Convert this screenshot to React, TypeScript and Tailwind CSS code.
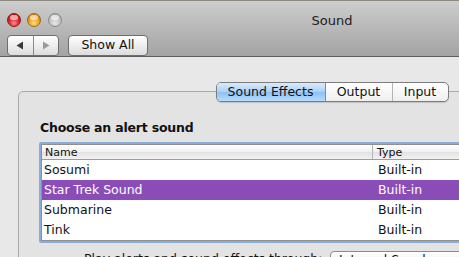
import React from "react";

const font = { fontFamily: '"DejaVu Sans", "Liberation Sans", sans-serif' };

function Light({ kind }: { kind: "red" | "yellow" | "gray" }) {
  const cls =
    kind === "red"
      ? "bg-[radial-gradient(circle_at_50%_75%,#ff8a8a_0%,#e0262b_45%,#a50d12_100%)] border-[#8a1a1a]"
      : kind === "yellow"
      ? "bg-[radial-gradient(circle_at_50%_75%,#ffe08a_0%,#f0a21f_45%,#b8650a_100%)] border-[#9a6a1a]"
      : "bg-[radial-gradient(circle_at_50%_75%,#e6e6e6_0%,#c4c4c4_50%,#9a9a9a_100%)] border-[#8a8a8a]";
  return (
    <div className={`relative w-[14px] h-[14px] rounded-full border ${cls}`}>
      <div className="mx-auto mt-[1px] w-[8px] h-[5px] rounded-full bg-white/60" />
    </div>
  );
}

const rows = [
  { name: "Sosumi", type: "Built-in" },
  { name: "Star Trek Sound", type: "Built-in", sel: true },
  { name: "Submarine", type: "Built-in" },
  { name: "Tink", type: "Built-in" },
];

export default function App() {
  return (
    <div className="w-[459px] h-[257px] overflow-hidden bg-[#e8e8e8]" style={font}>
      <div className="w-[664px]">
        {/* toolbar */}
        <div className="h-[57px] border-t border-[#8e8a82] border-b border-b-[#5c5c5c] bg-[linear-gradient(to_bottom,#cdcdcd,#a3a3a3)]">
          <div className="grid grid-cols-[1fr_auto_1fr] items-center pt-[8px] h-[22px] box-content">
            <div className="flex items-center pl-[7px] gap-[6px]">
              <Light kind="red" />
              <Light kind="yellow" />
              <div className="ml-[1px]">
                <Light kind="gray" />
              </div>
            </div>
            <div className="text-[13px] leading-none text-[#202020] pt-[1px]">Sound</div>
            <div />
          </div>
          <div className="flex items-center pl-[7px] pt-[4px] gap-[9px]">
            <div className="flex h-[21px] w-[52px] rounded-[4px] border border-[#6e6e6e] bg-[linear-gradient(to_bottom,#ffffff,#dcdcdc)] overflow-hidden">
              <div className="flex-1 flex items-center justify-center border-r border-[#8a8a8a]">
                <svg width="8" height="9" viewBox="0 0 8 9">
                  <path d="M7 0.5 L0.5 4.5 L7 8.5 Z" fill="#3a3a3a" />
                </svg>
              </div>
              <div className="flex-1 flex items-center justify-center">
                <svg width="8" height="9" viewBox="0 0 8 9">
                  <path d="M1 0.5 L7.5 4.5 L1 8.5 Z" fill="#9a9a9a" />
                </svg>
              </div>
            </div>
            <div className="h-[21px] w-[80px] rounded-[4px] border border-[#6e6e6e] bg-[linear-gradient(to_bottom,#ffffff,#dcdcdc)] flex items-center justify-center text-[12.5px] text-[#111]">
              Show All
            </div>
          </div>
        </div>

        {/* content */}
        <div className="px-[18px] pt-[25px]">
          <div className="relative z-10 flex justify-center">
            <div className="flex h-[20px] rounded-[5px] border border-[#7d7d7d] bg-[linear-gradient(to_bottom,#ffffff,#efefef)] shadow-[0_1px_1px_rgba(0,0,0,0.15)] overflow-hidden text-[12.5px] text-[#111]">
              <div className="w-[109px] flex items-center justify-center bg-[linear-gradient(to_bottom,#d9ebfd,#a9d0f6_50%,#8cc0f3_51%,#b6dcfb)] border-r border-[#6b8fb8]">
                Sound Effects
              </div>
              <div className="w-[67px] flex items-center justify-center border-r border-[#b4b4b4]">Output</div>
              <div className="w-[55px] flex items-center justify-center">Input</div>
            </div>
          </div>
          <div className="-mt-[11px] h-[300px] rounded-[5px] border border-[#a9a9a9] bg-[#e3e3e3] pt-[28px] pl-[20px] pr-[20px]">
            <div className="ml-[1px] text-[12.5px] leading-[15px] font-bold text-[#111] tracking-[-0.2px]">Choose an alert sound</div>
            <div className="mt-[7px] border-2 border-[#89acd9] rounded-[2px]">
              <div className="border border-[#8f8f8f] bg-white">
                <div className="flex h-[15px] border-b border-[#9c9c9c] bg-[linear-gradient(to_bottom,#ffffff,#f0f0f0_50%,#e2e2e2_51%,#f2f2f2)] text-[11px] leading-[13px] text-[#111]">
                  <div className="w-[331px] pl-[3px] flex items-center border-r border-[#b5b5b5]">Name</div>
                  <div className="pl-[4px] flex items-center">Type</div>
                </div>
                {rows.map((r) => (
                  <div
                    key={r.name}
                    className={`flex h-[20px] items-center text-[12.5px] ${
                      r.sel ? "bg-[#8a4db8] text-white" : "text-[#111]"
                    }`}
                  >
                    <div className="w-[331px] pl-[2px]">{r.name}</div>
                    <div className="pl-[5px]">{r.type}</div>
                  </div>
                ))}
              </div>
            </div>
            <div className="flex items-start mt-[8px] pl-[45px]">
              <div className="text-[12.5px] leading-[15px] text-[#111] w-[246px]">Play alerts and sound effects through:</div>
              <div className="h-[20px] w-[140px] rounded-[4px] border border-[#8a8a8a] bg-[linear-gradient(to_bottom,#ffffff,#e6e6e6)] pl-[8px] text-[12.5px] leading-[15px] text-[#111]">
                Internal Speakers
              </div>
            </div>
          </div>
        </div>
      </div>
    </div>
  );
}
